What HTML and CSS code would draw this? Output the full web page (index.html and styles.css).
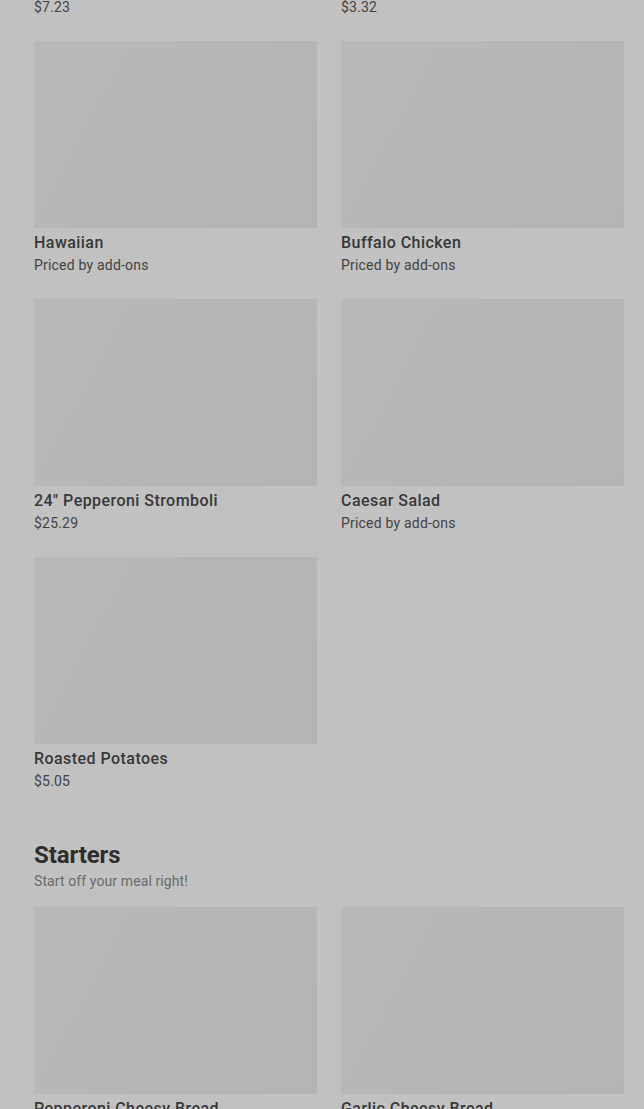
FILE: index.html
```html
<!DOCTYPE html>
<html lang="en">
<head>
<meta charset="utf-8">
<title>Menu</title>
<link rel="stylesheet" href="styles.css">
</head>
<body>
<main class="menu">
  <div class="grid">
    <div class="card-tail"><span class="price">$7.23</span></div>
    <div class="card-tail"><span class="price">$3.32</span></div>
    <div class="card">
      <div class="thumb"></div>
      <div class="name">Hawaiian</div>
      <div class="price">Priced by add-ons</div>
    </div>
    <div class="card">
      <div class="thumb"></div>
      <div class="name">Buffalo Chicken</div>
      <div class="price">Priced by add-ons</div>
    </div>
    <div class="card">
      <div class="thumb"></div>
      <div class="name">24" Pepperoni Stromboli</div>
      <div class="price">$25.29</div>
    </div>
    <div class="card">
      <div class="thumb"></div>
      <div class="name">Caesar Salad</div>
      <div class="price">Priced by add-ons</div>
    </div>
    <div class="card">
      <div class="thumb"></div>
      <div class="name">Roasted Potatoes</div>
      <div class="price">$5.05</div>
    </div>
  </div>

  <section class="section">
    <h2 class="section-title">Starters</h2>
    <p class="section-sub">Start off your meal right!</p>
    <div class="grid">
      <div class="card">
        <div class="thumb"></div>
        <div class="name">Pepperoni Cheesy Bread</div>
        <div class="price">$9.99</div>
      </div>
      <div class="card">
        <div class="thumb"></div>
        <div class="name">Garlic Cheesy Bread</div>
        <div class="price">$8.99</div>
      </div>
    </div>
  </section>
</main>
</body>
</html>
```

FILE: styles.css
```css
html, body {
  margin: 0;
  padding: 0;
  background: #c1c1c1;
  height: 100%;
  overflow: hidden;
}

body {
  font-family: Roboto, "Liberation Sans", sans-serif;
  color: #333333;
}

.menu {
  padding: 0 20px 0 34px;
}

.grid {
  display: grid;
  grid-template-columns: 1fr 1fr;
  column-gap: 24px;
  row-gap: 24px;
}

.card-tail {
  margin-top: -3px;
  line-height: 20px;
}

.card {
  display: flex;
  flex-direction: column;
}

.thumb {
  height: 187px;
  background: linear-gradient(118deg, #b9b9b9 0%, #b8b8b8 37%, #b5b5b5 40%, #b4b4b4 100%);
}

.name {
  margin-top: 5px;
  font-size: 16px;
  line-height: 20px;
  font-weight: 500;
  letter-spacing: 0.45px;
  color: #383838;
}

.price {
  margin-top: 2px;
  font-size: 14px;
  line-height: 20px;
  letter-spacing: 0.2px;
  color: #444444;
}

.card-tail .price {
  margin-top: 0;
}

.section {
  margin-top: 48px;
}

.section-title {
  margin: 0;
  font-size: 24px;
  line-height: 32px;
  font-weight: 700;
  letter-spacing: -0.1px;
  color: #2e2e2e;
}

.section-sub {
  margin: 0 0 16px;
  font-size: 14px;
  line-height: 20px;
  letter-spacing: 0.1px;
  color: #6b6b6b;
}
```
